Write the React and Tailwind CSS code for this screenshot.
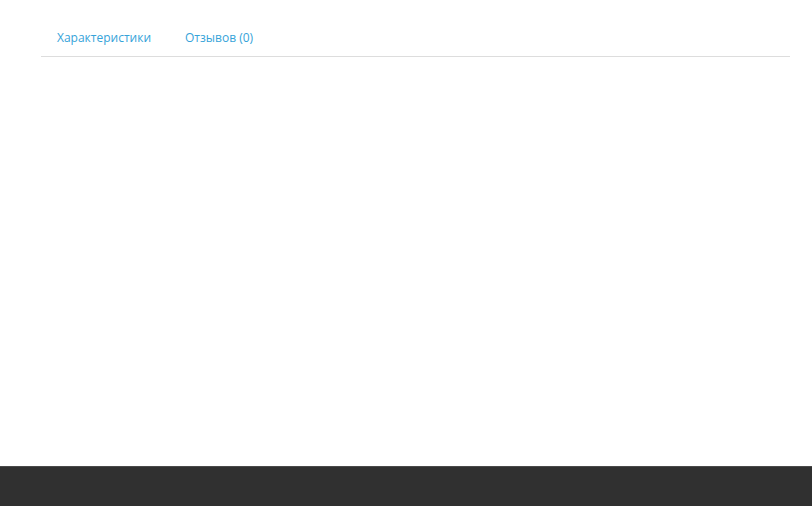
import React, { useState } from "react";

const tabs = ["Характеристики", "Отзывов (0)"];

const App = () => {
  const [active, setActive] = useState(-1);

  return (
    <div className="flex flex-col min-h-screen bg-white" style={{ fontFamily: '"Open Sans", "Noto Sans", sans-serif' }}>
      <div className="h-[466px] px-[41px] pt-[17px] w-[831px]">
        <ul className="flex border-b border-[#dddddd]">
          {tabs.map((t, i) => (
            <li key={t} className="mr-[2px] -mb-px">
              <a
                href="#"
                onClick={(e) => {
                  e.preventDefault();
                  setActive(i);
                }}
                className={
                  "block px-4 pt-[11px] pb-[9px] text-[12px] leading-5 text-[#35a3d9] " +
                  (active === i ? "border border-[#dddddd] border-b-white" : "")
                }
              >
                {t}
              </a>
            </li>
          ))}
        </ul>
      </div>
      <footer className="h-[40px] bg-[#303030] border-t border-[#4a4a4a]" />
    </div>
  );
};

export default App;
